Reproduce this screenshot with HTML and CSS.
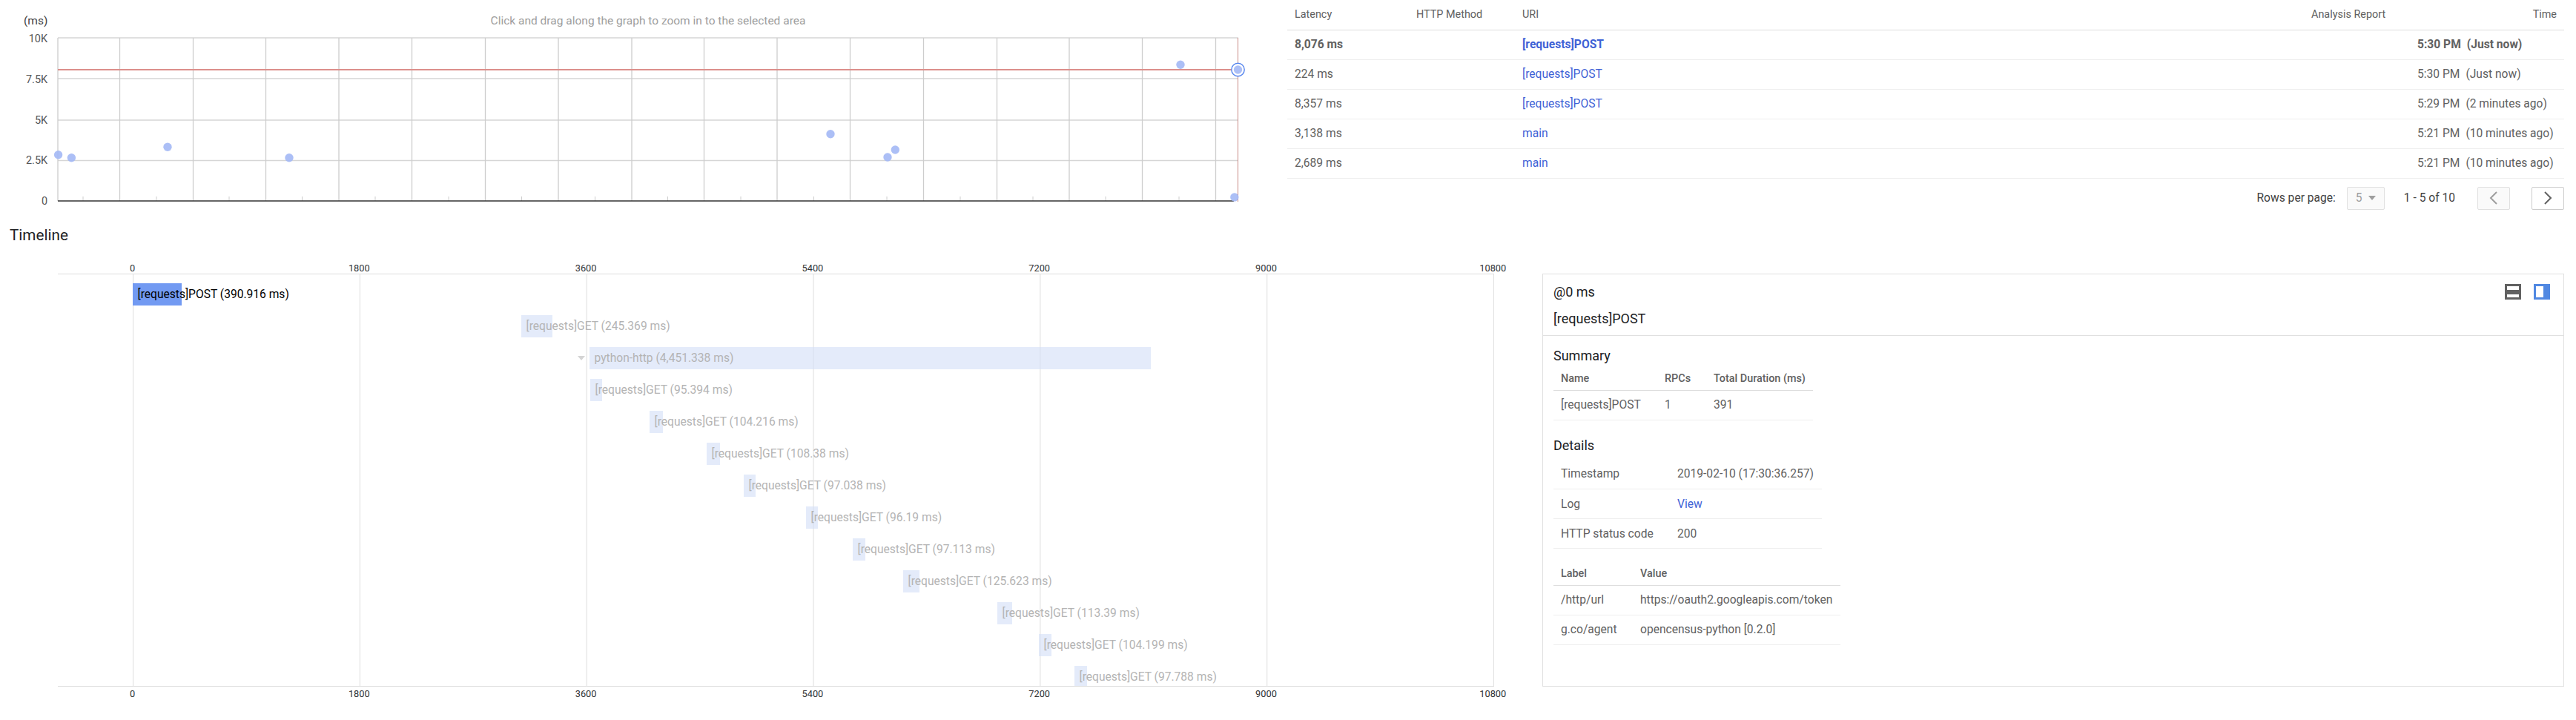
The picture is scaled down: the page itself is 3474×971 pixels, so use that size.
FILE: index.html
```html
<!DOCTYPE html>
<html lang="en">

<head>
    <meta charset="UTF-8">
    <meta name="viewport" content="width=device-width, initial-scale=1.0">
    <title>Trace details</title>
    <link rel="stylesheet" href="styles.css">
</head>

<body>

    <!-- latency chart and trace list -->
    <div class="top">
        <div class="scatter">
            <svg class="scatter-svg" width="1736" height="300" viewBox="0 0 1736 300">
                <text class="unit" x="32" y="33">(ms)</text>
                <text class="hint" x="874" y="33" text-anchor="middle">Click and drag along the graph to zoom in to the selected area</text>

                <g class="y-labels" text-anchor="end">
                    <text x="64" y="57">10K</text>
                    <text x="64" y="112">7.5K</text>
                    <text x="64" y="167">5K</text>
                    <text x="64" y="221">2.5K</text>
                    <text x="64" y="276">0</text>
                </g>

                <g class="grid-h">
                    <line x1="78" x2="1670" y1="51" y2="51" stroke-width="2"/>
                    <line x1="78" x2="1670" y1="106" y2="106"/>
                    <line x1="78" x2="1670" y1="162" y2="162"/>
                    <line x1="78" x2="1670" y1="216.5" y2="216.5"/>
                </g>
                <path class="grid-v" d="M78 51V271M161.5 51V271M260.5 51V271M358.5 51V271M457 51V271M555.5 51V271M654.5 51V271M753 51V271M852 51V271M949.5 51V271M1048 51V271M1146.5 51V271M1245.5 51V271M1344.5 51V271M1442 51V271M1540.5 51V271M1639.5 51V271"/>
                <path class="grid-minor" d="M112 265V271M211 265V271M309 265V271M407.5 265V271M506 265V271M605 265V271M703.5 265V271M802.5 265V271M900.5 265V271M999 265V271M1097.5 265V271M1196 265V271M1295 265V271M1393 265V271M1491 265V271M1590 265V271"/>

                <line class="axis-x" x1="78" x2="1664" y1="271" y2="271"/>
                <line class="red-line" x1="78" x2="1670" y1="94" y2="94"/>
                <line class="red-v" x1="1669.5" x2="1669.5" y1="51" y2="272"/>

                <g class="points">
                    <circle cx="78.6" cy="208.7" r="5.7"/>
                    <circle cx="96.4" cy="212.7" r="5.7"/>
                    <circle cx="226" cy="198.3" r="5.7"/>
                    <circle cx="390" cy="212.7" r="5.7"/>
                    <circle cx="1120" cy="180.7" r="5.7"/>
                    <circle cx="1197" cy="212" r="5.7"/>
                    <circle cx="1207.3" cy="202" r="5.7"/>
                    <circle cx="1592" cy="87.3" r="5.7"/>
                    <circle cx="1664.8" cy="266" r="5.7"/>
                </g>
                <circle class="ring" cx="1669.5" cy="94" r="8.7"/>
                <circle class="points-sel" cx="1669.5" cy="94" r="5.7"/>
            </svg>
        </div>

        <div class="traces">
            <table class="trace-table">
                <colgroup>
                    <col class="col-latency">
                    <col class="col-method">
                    <col class="col-uri">
                    <col class="col-report">
                    <col class="col-time">
                </colgroup>
                <thead>
                    <tr>
                        <th>Latency</th>
                        <th>HTTP Method</th>
                        <th>URI</th>
                        <th class="th-report">Analysis Report</th>
                        <th class="th-time">Time</th>
                    </tr>
                </thead>
                <tbody>
                    <tr class="selected">
                        <td>8,076 ms</td>
                        <td></td>
                        <td><a href="#">[requests]POST</a></td>
                        <td></td>
                        <td><span class="clock">5:30 PM</span>(Just now)</td>
                    </tr>
                    <tr>
                        <td>224 ms</td>
                        <td></td>
                        <td><a href="#">[requests]POST</a></td>
                        <td></td>
                        <td><span class="clock">5:30 PM</span>(Just now)</td>
                    </tr>
                    <tr>
                        <td>8,357 ms</td>
                        <td></td>
                        <td><a href="#">[requests]POST</a></td>
                        <td></td>
                        <td><span class="clock">5:29 PM</span>(2 minutes ago)</td>
                    </tr>
                    <tr>
                        <td>3,138 ms</td>
                        <td></td>
                        <td><a href="#">main</a></td>
                        <td></td>
                        <td><span class="clock">5:21 PM</span>(10 minutes ago)</td>
                    </tr>
                    <tr>
                        <td>2,689 ms</td>
                        <td></td>
                        <td><a href="#">main</a></td>
                        <td></td>
                        <td><span class="clock">5:21 PM</span>(10 minutes ago)</td>
                    </tr>
                </tbody>
            </table>

            <div class="pager">
                <span class="pager-label">Rows per page:</span>
                <div class="pager-select">
                    <span>5</span>
                    <i class="caret"></i>
                </div>
                <span class="pager-range">1 - 5 of 10</span>
                <div class="pager-btn pager-prev">
                    <svg width="14" height="18" viewBox="0 0 14 18"><polyline points="11,1 3,9 11,17"/></svg>
                </div>
                <div class="pager-btn pager-next">
                    <svg width="14" height="18" viewBox="0 0 14 18"><polyline points="3,1 11,9 3,17"/></svg>
                </div>
            </div>
        </div>
    </div>

    <h2 class="timeline-title">Timeline</h2>

    <div class="bottom">
        <!-- spans -->
        <div class="timeline">
            <div class="axis axis-top">
                <span>0</span><span>1800</span><span>3600</span><span>5400</span><span>7200</span><span>9000</span><span>10800</span>
            </div>
            <div class="spans">
                <div class="span span-active" style="margin-left: 101px; width: 66px;"><span class="span-label">[requests]POST (390.916 ms)</span></div>
                <div class="span" style="margin-left: 625px; width: 42px;"><span class="span-label">[requests]GET (245.369 ms)</span></div>
                <div class="span" style="margin-left: 717px; width: 757px;"><i class="span-toggle"></i><span class="span-label">python-http (4,451.338 ms)</span></div>
                <div class="span" style="margin-left: 718px; width: 16px;"><span class="span-label">[requests]GET (95.394 ms)</span></div>
                <div class="span" style="margin-left: 798px; width: 18px;"><span class="span-label">[requests]GET (104.216 ms)</span></div>
                <div class="span" style="margin-left: 875px; width: 18px;"><span class="span-label">[requests]GET (108.38 ms)</span></div>
                <div class="span" style="margin-left: 925px; width: 16px;"><span class="span-label">[requests]GET (97.038 ms)</span></div>
                <div class="span" style="margin-left: 1009px; width: 16px;"><span class="span-label">[requests]GET (96.19 ms)</span></div>
                <div class="span" style="margin-left: 1072px; width: 17px;"><span class="span-label">[requests]GET (97.113 ms)</span></div>
                <div class="span" style="margin-left: 1140px; width: 22px;"><span class="span-label">[requests]GET (125.623 ms)</span></div>
                <div class="span" style="margin-left: 1267px; width: 20px;"><span class="span-label">[requests]GET (113.39 ms)</span></div>
                <div class="span" style="margin-left: 1323px; width: 17px;"><span class="span-label">[requests]GET (104.199 ms)</span></div>
                <div class="span" style="margin-left: 1371px; width: 17px;"><span class="span-label">[requests]GET (97.788 ms)</span></div>
            </div>
            <div class="axis axis-bottom">
                <span>0</span><span>1800</span><span>3600</span><span>5400</span><span>7200</span><span>9000</span><span>10800</span>
            </div>
        </div>

        <!-- span details -->
        <div class="detail">
            <div class="detail-head">
                <div class="detail-icons">
                    <svg width="22" height="21" viewBox="0 0 22 21"><rect width="22" height="21" fill="#616161"/><rect x="3" y="3" width="16" height="5" fill="#fff"/><rect x="3" y="14" width="16" height="4" fill="#fff"/></svg>
                    <svg width="22" height="21" viewBox="0 0 22 21"><rect width="22" height="21" fill="#5088e2"/><rect x="3" y="3" width="10" height="15" fill="#fff"/></svg>
                </div>
                <div class="detail-time">@0 ms</div>
                <div class="detail-name">[requests]POST</div>
            </div>
            <div class="detail-body">
                <h3 class="summary-title">Summary</h3>
                <table class="mini summary-table">
                    <colgroup>
                        <col class="col-s1">
                        <col class="col-s2">
                        <col>
                    </colgroup>
                    <thead>
                        <tr><th>Name</th><th>RPCs</th><th>Total Duration (ms)</th></tr>
                    </thead>
                    <tbody>
                        <tr><td>[requests]POST</td><td>1</td><td>391</td></tr>
                    </tbody>
                </table>

                <h3 class="details-title">Details</h3>
                <table class="mini details-table">
                    <colgroup>
                        <col class="col-d1">
                        <col>
                    </colgroup>
                    <tbody>
                        <tr><td>Timestamp</td><td>2019-02-10 (17:30:36.257)</td></tr>
                        <tr><td>Log</td><td><a href="#">View</a></td></tr>
                        <tr><td>HTTP status code</td><td>200</td></tr>
                    </tbody>
                </table>

                <table class="mini labels-table">
                    <colgroup>
                        <col class="col-l1">
                        <col>
                    </colgroup>
                    <thead>
                        <tr><th>Label</th><th>Value</th></tr>
                    </thead>
                    <tbody>
                        <tr><td>/http/url</td><td>https://oauth2.googleapis.com/token</td></tr>
                        <tr><td>g.co/agent</td><td>opencensus-python [0.2.0]</td></tr>
                    </tbody>
                </table>
            </div>
        </div>
    </div>

</body>

</html>
```

FILE: styles.css
```css
html,
body {
    height: 100%;
}

body {
    margin: 0;
    background: #fff;
    font-family: Roboto, "Liberation Sans", sans-serif;
    color: #616161;
    overflow: hidden;
}

a {
    color: #3f62d6;
    text-decoration: none;
}

/* top row */
.top {
    display: flex;
    height: 300px;
}

.scatter {
    width: 1736px;
    flex: none;
}

.scatter-svg {
    display: block;
}

.scatter-svg text {
    font-family: Roboto, sans-serif;
}

.unit {
    font-size: 15.5px;
    fill: #444;
}

.hint {
    font-size: 15.5px;
    fill: #9e9e9e;
}

.y-labels {
    font-size: 14.4px;
    fill: #555;
}

.grid-h line {
    stroke: #d6d6d6;
    stroke-width: 1.5;
}

.grid-v {
    stroke: #cdcdcd;
    stroke-width: 1.3;
    fill: none;
}

.grid-minor {
    stroke: #ccc;
    stroke-width: 1;
    fill: none;
}

.axis-x {
    stroke: #333;
    stroke-width: 1.6;
}

.red-line {
    stroke: #dc8f8b;
    stroke-width: 2;
}

.red-v {
    stroke: #c98a86;
    stroke-width: 1;
}

.points circle,
.points-sel {
    fill: #a3b8f5;
    fill-opacity: 0.9;
}

.ring {
    fill: #fff;
    stroke: #5585ee;
    stroke-width: 1.4;
}

/* trace list */
.traces {
    width: 1722px;
    flex: none;
}

.trace-table {
    width: 100%;
    table-layout: fixed;
    border-collapse: collapse;
    font-size: 15.6px;
}

.col-latency {
    width: 164px;
}

.col-method {
    width: 143px;
}

.col-report {
    width: 143px;
}

.col-time {
    width: 208px;
}

.trace-table th {
    height: 40px;
    padding: 0 10px;
    box-sizing: border-box;
    border-bottom: 1.5px solid #ddd;
    font-size: 14.4px;
    font-weight: 400;
    text-align: left;
    white-space: nowrap;
}

.trace-table .th-report {
    text-align: right;
    padding-right: 33px;
}

.trace-table .th-time {
    text-align: right;
}

.trace-table td {
    height: 40px;
    padding: 0 10px;
    box-sizing: border-box;
    border-bottom: 1px solid #eee;
    white-space: nowrap;
}

.trace-table .selected td {
    font-weight: 700;
}

.clock {
    margin-right: 8px;
}

.pager {
    display: flex;
    justify-content: flex-end;
    align-items: center;
    margin-top: 11px;
    height: 31px;
    font-size: 15.6px;
    color: #424242;
}

.pager-select {
    width: 51px;
    height: 31px;
    box-sizing: border-box;
    margin-left: 15px;
    padding: 0 11px;
    display: flex;
    justify-content: space-between;
    align-items: center;
    background: #fafafa;
    border: 1px solid #e0e0e0;
    border-radius: 2px;
    color: #9e9e9e;
}

.caret {
    border-left: 5px solid transparent;
    border-right: 5px solid transparent;
    border-top: 6px solid #9e9e9e;
}

.pager-range {
    margin: 0 30px 0 26px;
}

.pager-btn {
    width: 44px;
    height: 31px;
    box-sizing: border-box;
    display: flex;
    justify-content: center;
    align-items: center;
    border-radius: 2px;
}

.pager-btn polyline {
    fill: none;
    stroke-width: 2;
}

.pager-prev {
    background: #fafafa;
    border: 1px solid #e0e0e0;
    margin-right: 29px;
}

.pager-prev polyline {
    stroke: #9e9e9e;
}

.pager-next {
    border: 1px solid #ccc;
}

.pager-next polyline {
    stroke: #616161;
}

/* timeline */
.timeline-title {
    margin: 0;
    padding-left: 13px;
    height: 45px;
    font-size: 20.7px;
    line-height: 34px;
    font-weight: 400;
    color: #202124;
}

.bottom {
    display: flex;
    align-items: flex-start;
}

.timeline {
    width: 1937px;
    margin-left: 78px;
    flex: none;
}

.axis {
    display: flex;
    margin-left: -52.4px;
    font-size: 12.8px;
    color: #333;
}

.axis span {
    width: 305.8px;
    flex: none;
    text-align: center;
}

.axis-top {
    height: 24px;
    line-height: 33px;
}

.axis-bottom {
    height: 24px;
    line-height: 20px;
}

.spans {
    height: 557px;
    box-sizing: border-box;
    padding-top: 11.5px;
    margin-right: 0;
    border-top: 1.5px solid #ddd;
    border-bottom: 1.5px solid #ddd;
    overflow: hidden;
    background-image: linear-gradient(90deg, #dedede 1px, transparent 1px);
    background-size: 305.85px 100%;
    background-position: 101px 0;
}

.span {
    position: relative;
    height: 30px;
    margin-bottom: 13px;
    padding-left: 6.5px;
    box-sizing: border-box;
    background: rgba(210, 222, 246, 0.6);
    font-size: 15.6px;
    line-height: 30px;
    color: #b4b4b4;
    white-space: nowrap;
}

.span-active {
    background: #729af2;
    color: #000;
}

/* little triangle in front of a span with children */
.span-toggle {
    position: absolute;
    left: -16px;
    top: 12px;
    border-left: 5px solid transparent;
    border-right: 5px solid transparent;
    border-top: 6px solid #d4d4d4;
}

/* details panel */
.detail {
    width: 1378px;
    height: 557px;
    box-sizing: border-box;
    flex: none;
    margin: 24px 0 0 65px;
    border: 1.5px solid #e0e0e0;
}

.detail-head {
    height: 83px;
    box-sizing: border-box;
    padding: 0 14px;
    border-bottom: 1.5px solid #e0e0e0;
    color: #202124;
    position: relative;
    font-size: 18px;
}

.detail-icons {
    position: absolute;
    top: 13px;
    right: 18.5px;
    display: flex;
    gap: 17px;
}

.detail-icons svg {
    display: block;
}

.detail-time {
    height: 36px;
    line-height: 47px;
}

.detail-name {
    height: 36px;
    line-height: 47px;
}

.detail-body {
    padding: 0 14px;
}

.summary-title,
.details-title {
    margin: 0;
    font-size: 18px;
    font-weight: 400;
    color: #202124;
}

.summary-title {
    height: 43px;
    line-height: 53px;
}

.details-title {
    height: 40px;
    margin-top: 13px;
    line-height: 42px;
}

.mini {
    border-collapse: collapse;
    table-layout: fixed;
    font-size: 15.6px;
}

.mini th {
    height: 30px;
    padding: 0 10px;
    box-sizing: border-box;
    border-bottom: 1.5px solid #ddd;
    font-size: 14.4px;
    font-weight: 500;
    text-align: left;
    white-space: nowrap;
}

.mini td {
    height: 40px;
    padding: 0 10px;
    box-sizing: border-box;
    border-bottom: 1px solid #eee;
    white-space: nowrap;
}

.summary-table {
    width: 350px;
}

.col-s1 {
    width: 140px;
}

.col-s2 {
    width: 66px;
}

.details-table {
    width: 362px;
    margin-bottom: 19px;
}

.col-d1 {
    width: 157px;
}

.labels-table {
    width: 387px;
}

.col-l1 {
    width: 107px;
}
```
